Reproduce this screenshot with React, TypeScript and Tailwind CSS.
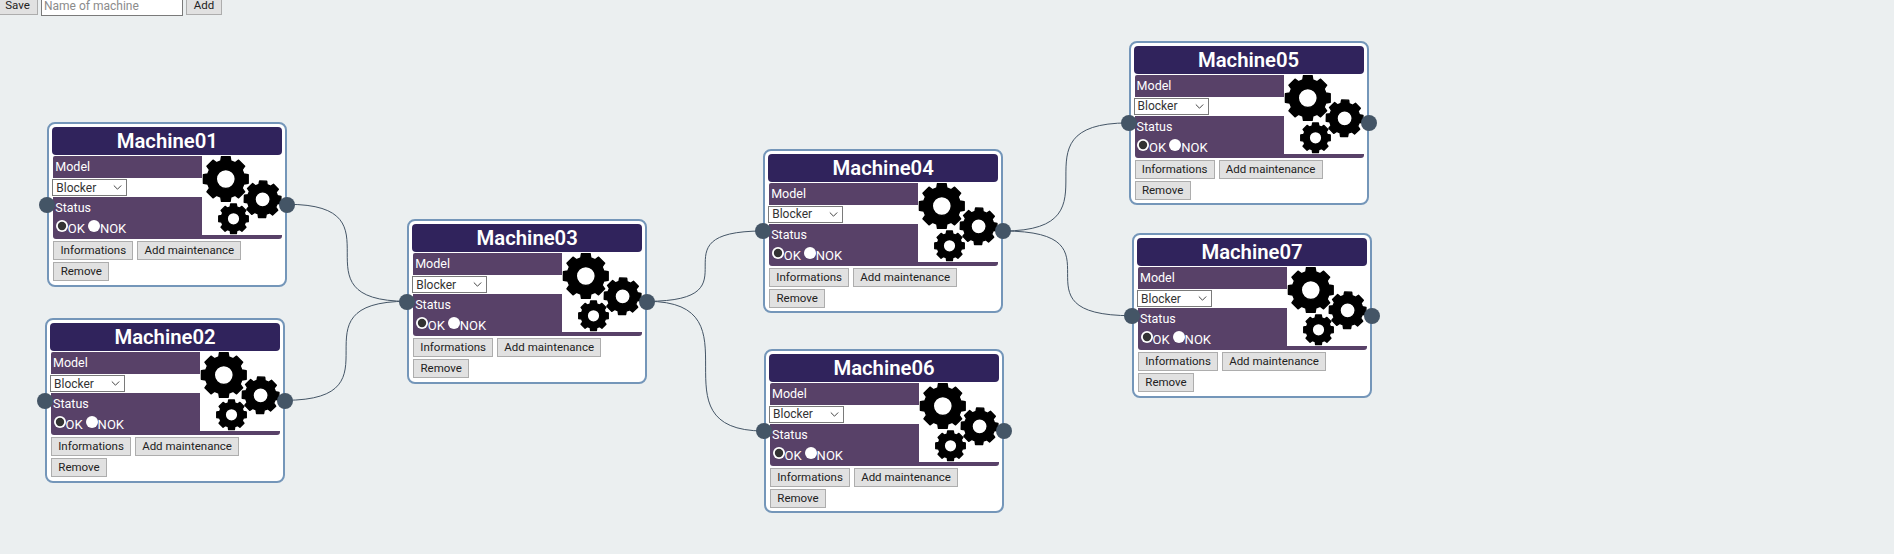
import React from "react";

type Machine = { name: string; x: number; y: number };

const machines: Machine[] = [
  { name: "Machine01", x: 47.3, y: 122 },
  { name: "Machine02", x: 45, y: 318 },
  { name: "Machine03", x: 407.2, y: 219 },
  { name: "Machine04", x: 763.2, y: 148.7 },
  { name: "Machine05", x: 1128.6, y: 40.6 },
  { name: "Machine06", x: 764, y: 348.7 },
  { name: "Machine07", x: 1132, y: 233.4 },
];

const links: [number, number][] = [
  [0, 2],
  [1, 2],
  [2, 3],
  [2, 5],
  [3, 4],
  [3, 6],
];

const PORT_Y = 82.3;
const CARD_W = 240;

function linkPath([from, to]: [number, number]) {
  const x1 = machines[from].x + CARD_W;
  const y1 = machines[from].y + PORT_Y;
  const x2 = machines[to].x;
  const y2 = machines[to].y + PORT_Y;
  const d = x2 - x1;
  return `M${x1} ${y1}C${x1 + d} ${y1} ${x2 - d} ${y2} ${x2} ${y2}`;
}

function gearPath(cx: number, cy: number, r: number, hole: number, turn: number) {
  const root = r * 0.82;
  const pts: string[] = [];
  for (let i = 0; i < 8; i++) {
    const a = turn + (i * Math.PI) / 4;
    const corners: [number, number][] = [
      [-0.27, root],
      [-0.19, r],
      [0.19, r],
      [0.27, root],
    ];
    for (const [da, rad] of corners) {
      pts.push(`${(cx + rad * Math.sin(a + da)).toFixed(2)} ${(cy - rad * Math.cos(a + da)).toFixed(2)}`);
    }
  }
  return `M${pts.join("L")}ZM${cx - hole} ${cy}a${hole} ${hole} 0 1 0 ${2 * hole} 0a${hole} ${hole} 0 1 0 ${-2 * hole} 0Z`;
}

const gears = [
  gearPath(23.8, 23, 22.8, 9.5, 0),
  gearPath(60.6, 43.3, 18.6, 7.6, 0.03),
  gearPath(31.5, 62.8, 15, 6.3, 0),
];

function Gears() {
  return (
    <svg className="block h-[79px] w-[80px] shrink-0 bg-white" viewBox="0 0 80 79">
      {gears.map((d) => (
        <path key={d} d={d} fill="#000" fillRule="evenodd" stroke="#000" strokeWidth="1.4" strokeLinejoin="round" />
      ))}
    </svg>
  );
}

function Button({ children, className = "" }: { children: React.ReactNode; className?: string }) {
  return (
    <button
      className={`border border-[#adadad] bg-[#e1e1e1] text-center text-[11.5px] whitespace-nowrap text-[#222] ${className}`}
    >
      {children}
    </button>
  );
}

function Radio({ checked = false }: { checked?: boolean }) {
  return (
    <svg className="size-[12px] shrink-0" viewBox="0 0 12 12">
      <circle cx="6" cy="6" r="6" fill="#fff" />
      {checked && <circle cx="6" cy="6" r="4.2" fill="#333" />}
    </svg>
  );
}

function MachineCard({ name, x, y }: Machine) {
  return (
    <div
      className="absolute flex h-[164.5px] w-[240px] flex-col rounded-[8px] border-2 border-[#7496b9] bg-white pt-[3px] pl-[3px]"
      style={{ left: x, top: y }}
    >
      <h2 className="h-[28px] w-[230px] rounded-[4px] bg-[#30235c] text-center text-[20.3px] leading-[28px] font-semibold text-white">
        {name}
      </h2>
      <div className="mt-[1px] ml-[1px] flex h-[83px] w-[229px] rounded-[3px] border-b-4 border-[#584168] text-[12.5px] text-white">
        <div className="flex w-[149px] flex-col">
          <div className="h-[22px] rounded-tl-[2px] bg-[#584168] pl-[2px] leading-[22px]">Model</div>
          <div className="my-[1px] -ml-[1px] flex h-[17px] w-[75px] shrink-0 items-center justify-between border border-[#7a7a7a] bg-white pr-[4px] pl-[3px] text-[12px] text-[#333]">
            Blocker
            <svg className="size-[9px]" viewBox="0 0 9 9" fill="none" stroke="#444" strokeWidth="1">
              <path d="M.8 2.5 4.5 6.2 8.2 2.5" />
            </svg>
          </div>
          <div className="flex-1 bg-[#584168] pl-[2px]">
            <div className="h-[21px] leading-[22px]">Status</div>
            <div className="flex h-[16px] items-start pt-[2px] pl-[0.5px] text-[13px] leading-[18px]">
              <Radio checked />
              <span className="mr-[3px]">OK</span>
              <Radio />
              <span>NOK</span>
            </div>
          </div>
        </div>
        <Gears />
      </div>
      <div className="mt-[2px] ml-[1px] flex flex-wrap gap-x-[4px] gap-y-[2px]">
        <Button className="h-[19px] w-[80px] leading-[17px]">Informations</Button>
        <Button className="h-[19px] w-[104px] leading-[17px]">Add maintenance</Button>
        <Button className="h-[19px] w-[56px] leading-[17px]">Remove</Button>
      </div>
      <span className="absolute top-[72.5px] -left-[10px] size-[16px] rounded-full bg-[#445566]" />
      <span className="absolute top-[72.5px] left-[230px] size-[16px] rounded-full bg-[#445566]" />
    </div>
  );
}

export default function App() {
  return (
    <div className="relative h-[554px] w-full overflow-hidden bg-[#ebeff0] font-[Roboto,sans-serif]">
      <div className="flex h-[16px] items-start gap-[3px]">
        <Button className="h-[15px] w-[38px] border-t-0 border-l-0 pr-[2px] pb-[3px] leading-[11px]">Save</Button>
        <input
          className="h-[16px] w-[142px] border border-t-0 border-[#7a7a7a] bg-white px-[2px] pb-[4px] text-[12px] leading-[11px] placeholder:text-[#8b8b8b]"
          placeholder="Name of machine"
        />
        <Button className="h-[15px] w-[36px] border-t-0 pb-[3px] leading-[11px]">Add</Button>
      </div>
      <svg className="absolute inset-0 size-full" fill="none" stroke="#445566" strokeWidth="1">
        {links.map((l) => (
          <path key={l.join("-")} d={linkPath(l)} />
        ))}
      </svg>
      {machines.map((m) => (
        <MachineCard key={m.name} {...m} />
      ))}
    </div>
  );
}
